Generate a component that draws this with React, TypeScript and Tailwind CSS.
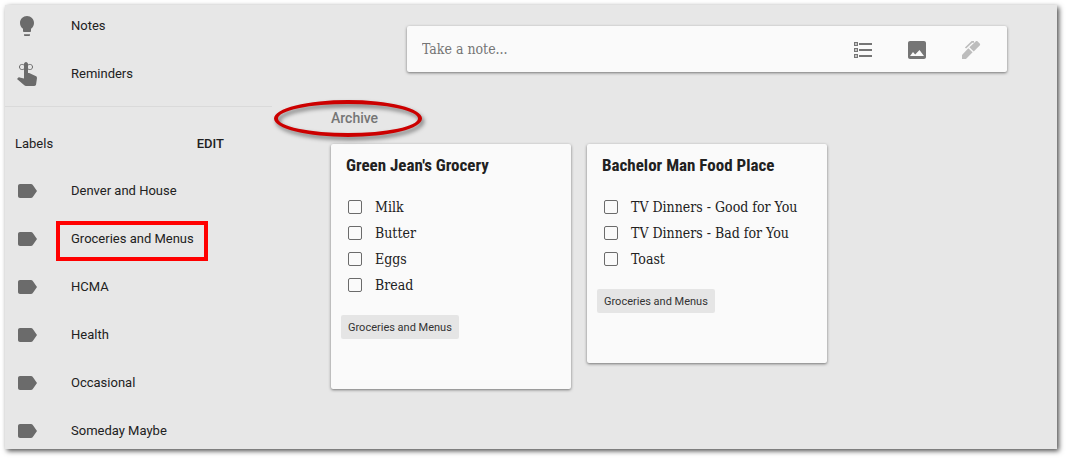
import type { ReactNode } from "react";

const slab = "font-['Roboto_Slab','DejaVu_Serif_Condensed','DejaVu_Serif',serif]";

function Icon({ children, className }: { children: ReactNode; className?: string }) {
  return (
    <svg viewBox="0 0 24 24" width="24" height="24" fill="currentColor" aria-hidden="true" className={className}>
      {children}
    </svg>
  );
}

function BulbIcon() {
  return (
    <Icon>
      <path d="M9 20.200h6v.8c0 .55-.45 1-1 1h-4c-.55 0-1-.45-1-1zM12 2C8.140 2 5 5.140 5 9c0 2.380 1.190 4.470 3 5.740V17c0 .55.45 1 1 1h6c.55 0 1-.45 1-1v-2.260c1.810-1.270 3-3.360 3-5.740 0-3.860-3.140-7-7-7z" />
    </Icon>
  );
}

function ReminderIcon() {
  return (
    <Icon>
      <path d="M9 2.200C9 1 9.900 0 11 0s2 1 2 2.200V11h.8c.3 0 .6.100.9.200L20.600 14c.9.400 1.400 1.200 1.400 2.100l-.9 6.200c-.1 1-.9 1.700-1.800 1.700H11c-.7 0-1.300-.3-1.700-.7L2 17l1.200-1.200c.4-.4.9-.5 1.400-.4L9 16.500z" />
      <path
        d="M9.500 3.500C8 1.800 4.500 2 4.500 5s3.500 3.200 5 1.500M12.500 3.500C14 1.800 17.500 2 17.500 5s-3.500 3.200-5 1.500"
        fill="none"
        stroke="currentColor"
      />
    </Icon>
  );
}

function LabelIcon() {
  return (
    <Icon>
      <path d="M17.630 5.840C17.270 5.330 16.670 5 16 5L5 5.010C3.900 5.010 3 5.900 3 7v10c0 1.100.9 1.990 2 1.990L16 19c.67 0 1.270-.33 1.630-.84L22 12l-4.370-6.160z" />
    </Icon>
  );
}

function NavItem({ icon, text, boxed }: { icon: ReactNode; text: string; boxed?: boolean }) {
  return (
    <li>
      <a href="#" className="relative flex h-9 items-center gap-8 pl-2.5">
        <span className="text-[#6b6b6b]">{icon}</span>
        <span>{text}</span>
        {boxed && (
          <span className="pointer-events-none absolute top-0 left-[51px] h-10 w-[152px] border-4 border-[#ff0000]" />
        )}
      </a>
    </li>
  );
}

function NoteCard({ title, items }: { title: string; items: string[] }) {
  return (
    <article className="w-60 rounded-xs bg-[#fafafa] pt-[9px] pb-[50px] shadow-[0_1px_3px_rgba(0,0,0,0.5)]">
      <h2 className="px-[15px] font-['Roboto_Condensed','Roboto',sans-serif] text-[17px] leading-6 font-bold text-[#212121]">
        {title}
      </h2>
      <ul className="mt-[17px] px-[17px]">
        {items.map((item) => (
          <li key={item}>
            <label className={`flex h-[26px] items-center gap-[13px] text-sm text-[#212121] ${slab}`}>
              <input
                type="checkbox"
                className="size-3.5 shrink-0 appearance-none rounded-xs border border-[#6b6b6b] checked:bg-[#6b6b6b]"
              />
              {item}
            </label>
          </li>
        ))}
      </ul>
      <button className="mt-[17px] ml-2.5 block h-6 rounded-xs bg-[#e5e5e5] px-[7px] pt-0.5 text-[11px] text-[#333]">
        Groceries and Menus
      </button>
    </article>
  );
}

const labels = ["Denver and House", "Groceries and Menus", "HCMA", "Health", "Occasional", "Someday Maybe"];

export default function App() {
  return (
    <div className="bg-white pt-[5px] pr-[9px] pb-[9px] pl-[5px] font-['Roboto',sans-serif] text-[13px] text-[#212121]">
      <div className="flex bg-[#e7e7e7] shadow-[2px_2px_5px_rgba(0,0,0,0.7)]">
        <nav className="w-[267px] shrink-0 pt-[3px]">
          <ul className="flex flex-col gap-3 pb-3.5">
            <NavItem icon={<BulbIcon />} text="Notes" />
            <NavItem icon={<ReminderIcon />} text="Reminders" />
          </ul>
          <div className="border-t border-[#dadada] pt-[19px]">
            <div className="mb-[11px] flex h-9 items-center justify-between pr-12 pl-2.5">
              <h2>Labels</h2>
              <button className="font-medium">EDIT</button>
            </div>
            <ul className="flex flex-col gap-3">
              {labels.map((label) => (
                <NavItem key={label} icon={<LabelIcon />} text={label} boxed={label === "Groceries and Menus"} />
              ))}
            </ul>
          </div>
        </nav>

        <main className="min-w-0 grow pt-[21px] pr-[50px] pl-[59px]">
          <form className="ml-[76px] flex h-[46px] max-w-[600px] items-center rounded-xs bg-[#fafafa] pr-6 pl-[15px] shadow-[0_1px_3px_rgba(0,0,0,0.5)]">
            <input
              type="text"
              aria-label="Take a note"
              placeholder="Take a note..."
              className={`min-w-0 grow bg-transparent text-sm outline-none placeholder:text-[#757575] ${slab}`}
            />
            <div className="flex gap-[30px] pt-0.5 text-[#757575]">
              <button type="button" aria-label="New list">
                <Icon>
                  <path d="M8 5h13v2H8zM8 11h13v2H8zM8 17h13v2H8z" />
                  <path
                    d="M3.600 4.600h2.800v2.800h-2.800zM3.600 10.600h2.800v2.800h-2.800zM3.600 16.600h2.800v2.800h-2.800z"
                    fill="none"
                    stroke="currentColor"
                    strokeWidth="1.200"
                  />
                </Icon>
              </button>
              <button type="button" aria-label="New note with image">
                <Icon>
                  <path d="M21 19V5c0-1.100-.9-2-2-2H5c-1.100 0-2 .9-2 2v14c0 1.100.9 2 2 2h14c1.100 0 2-.9 2-2zM5 18l3-4 2.200 2.500L14.500 12l4.500 6z" />
                </Icon>
              </button>
              <button type="button" aria-label="New note with drawing">
                <Icon className="text-[#bdbdbd]">
                  <path d="M3 17v4h4l6.600-6.700-4.300-4zM10.400 9.300l4.300 4.300 6-6c.6-.6.6-1.500 0-2.100l-2-2c-.6-.6-1.500-.6-2.100 0z" />
                  <path d="M6.500 10L13 3.800h2" fill="none" stroke="currentColor" strokeWidth="1.700" />
                </Icon>
              </button>
            </div>
          </form>

          <section className="pt-9">
            <h1 className="relative w-fit text-sm leading-5 font-medium text-[#757575]">
              Archive
              <span className="pointer-events-none absolute top-[-8px] left-[-57px] h-[37px] w-[148px] rounded-[50%] border-4 border-[#cc0000] drop-shadow-[2px_3px_2px_rgba(0,0,0,0.5)]" />
            </h1>
            <div className="mt-4 flex flex-wrap items-start gap-4">
              <NoteCard title="Green Jean's Grocery" items={["Milk", "Butter", "Eggs", "Bread"]} />
              <NoteCard
                title="Bachelor Man Food Place"
                items={["TV Dinners - Good for You", "TV Dinners - Bad for You", "Toast"]}
              />
            </div>
          </section>
        </main>
      </div>
    </div>
  );
}
